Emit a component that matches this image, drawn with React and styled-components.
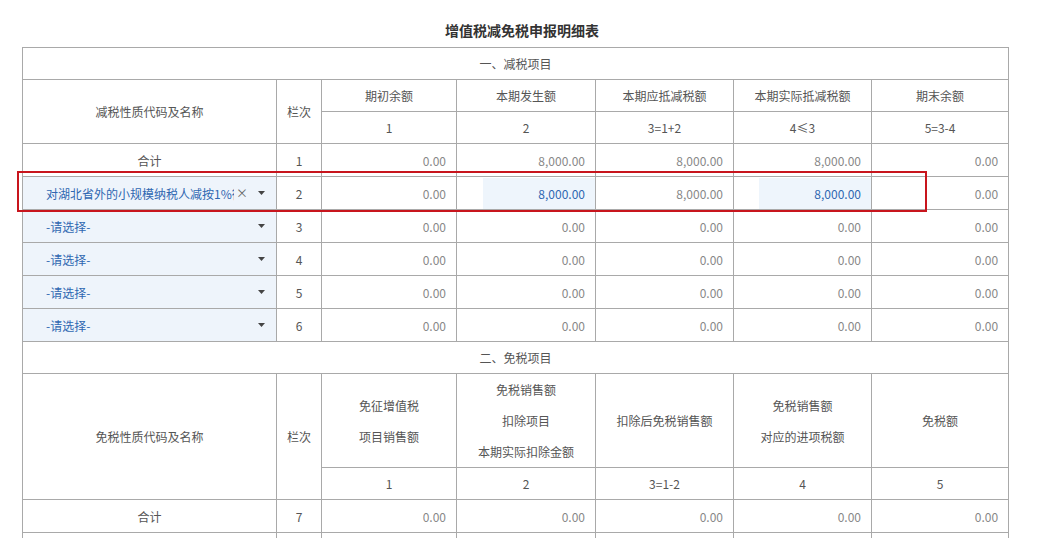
import React from 'react';
import styled, { createGlobalStyle } from 'styled-components';

const GlobalStyle = createGlobalStyle`
  html, body {
    margin: 0;
    padding: 0;
    background: #fff;
  }
  body {
    font-family: "Microsoft YaHei", "Noto Sans CJK SC", "Noto Sans", sans-serif;
    font-size: 12px;
    color: #555;
  }
`;

const Page = styled.div`
  width: 1046px;
  height: 538px;
  overflow: hidden;
  padding-left: 22px;
  box-sizing: border-box;
`;

const Title = styled.div`
  width: 1000px;
  height: 47px;
  padding-top: 21px;
  box-sizing: border-box;
  text-align: center;
  font-size: 14px;
  line-height: 18px;
  font-weight: bold;
  color: #333;
`;

const Wrap = styled.div`
  position: relative;
  width: 986px;
`;

const Table = styled.table`
  border-collapse: collapse;
  table-layout: fixed;
  width: 986px;
`;

const Col = styled.col`
  width: ${(p) => p.$w}px;
`;

const Cell = styled.td`
  border: 1px solid #a9a9a9;
  height: ${(p) => p.$h || 31}px;
  padding: 0;
  text-align: ${(p) => p.$align || 'center'};
  vertical-align: middle;
  color: ${(p) => (p.$muted ? '#888' : '#555')};
  line-height: ${(p) => (p.$lh ? `${p.$lh}px` : 'normal')};
  white-space: nowrap;
  ${(p) => p.$align === 'right' && 'padding-right: 10px;'}
`;

const SelectCell = styled.td`
  border: 1px solid #a9a9a9;
  height: 32px;
  padding: 0;
  background: #eef4fb;
`;

const SelectBox = styled.div`
  display: flex;
  align-items: center;
  padding: 0 11px 0 23px;
  color: #2f67b1;
`;

const SelectText = styled.span`
  flex: 1;
  min-width: 0;
  overflow: hidden;
  white-space: nowrap;
`;

const Clear = styled.span`
  color: #666;
  font-size: 12px;
  line-height: 1;
  margin: 0 10px 0 2px;
`;

const InputCell = styled.td`
  border: 1px solid #a9a9a9;
  height: 32px;
  padding: 0;
`;

const InputBox = styled.div`
  margin-left: auto;
  width: 112px;
  height: 31px;
  box-sizing: border-box;
  padding-right: 10px;
  background: #eef5fc;
  color: #2f67b1;
  text-align: right;
  line-height: 31px;
`;

const Highlight = styled.div`
  position: absolute;
  left: -5px;
  top: 124px;
  width: 910px;
  height: 41px;
  border: 2px solid #c8151d;
  box-sizing: border-box;
  pointer-events: none;
`;

const Caret = () => (
  <svg width="7" height="4" viewBox="0 0 7 4">
    <path d="M0 0h7L3.5 4z" fill="#444" />
  </svg>
);

const widths = [254, 45, 135, 139, 138, 138, 137];

const emptyRows = [3, 4, 5, 6];

const Num = ({ children }) => (
  <Cell $align="right" $muted $h={32}>
    {children}
  </Cell>
);

const App = () => (
  <>
    <GlobalStyle />
    <Page>
      <Title>增值税减免税申报明细表</Title>
      <Wrap>
        <Table>
          <colgroup>
            {widths.map((w, i) => (
              <Col key={i} $w={w} />
            ))}
          </colgroup>
          <tbody>
            <tr>
              <Cell colSpan={7}>一、减税项目</Cell>
            </tr>
            <tr>
              <Cell rowSpan={2}>减税性质代码及名称</Cell>
              <Cell rowSpan={2}>栏次</Cell>
              <Cell>期初余额</Cell>
              <Cell>本期发生额</Cell>
              <Cell>本期应抵减税额</Cell>
              <Cell>本期实际抵减税额</Cell>
              <Cell>期末余额</Cell>
            </tr>
            <tr>
              <Cell>1</Cell>
              <Cell>2</Cell>
              <Cell>3=1+2</Cell>
              <Cell>4≤3</Cell>
              <Cell>5=3-4</Cell>
            </tr>
            <tr>
              <Cell $h={32}>合计</Cell>
              <Cell $h={32}>1</Cell>
              <Num>0.00</Num>
              <Num>8,000.00</Num>
              <Num>8,000.00</Num>
              <Num>8,000.00</Num>
              <Num>0.00</Num>
            </tr>
            <tr>
              <SelectCell>
                <SelectBox>
                  <SelectText>对湖北省外的小规模纳税人减按1%征</SelectText>
                  <Clear>×</Clear>
                  <Caret />
                </SelectBox>
              </SelectCell>
              <Cell $h={32}>2</Cell>
              <Num>0.00</Num>
              <InputCell>
                <InputBox>8,000.00</InputBox>
              </InputCell>
              <Num>8,000.00</Num>
              <InputCell>
                <InputBox>8,000.00</InputBox>
              </InputCell>
              <Num>0.00</Num>
            </tr>
            {emptyRows.map((n) => (
              <tr key={n}>
                <SelectCell>
                  <SelectBox>
                    <SelectText>-请选择-</SelectText>
                    <Caret />
                  </SelectBox>
                </SelectCell>
                <Cell $h={32}>{n}</Cell>
                <Num>0.00</Num>
                <Num>0.00</Num>
                <Num>0.00</Num>
                <Num>0.00</Num>
                <Num>0.00</Num>
              </tr>
            ))}
            <tr>
              <Cell colSpan={7}>二、免税项目</Cell>
            </tr>
            <tr>
              <Cell rowSpan={2}>免税性质代码及名称</Cell>
              <Cell rowSpan={2}>栏次</Cell>
              <Cell $h={93} $lh={31}>
                免征增值税
                <br />
                项目销售额
              </Cell>
              <Cell $h={93} $lh={31}>
                免税销售额
                <br />
                扣除项目
                <br />
                本期实际扣除金额
              </Cell>
              <Cell $h={93}>扣除后免税销售额</Cell>
              <Cell $h={93} $lh={31}>
                免税销售额
                <br />
                对应的进项税额
              </Cell>
              <Cell $h={93}>免税额</Cell>
            </tr>
            <tr>
              <Cell>1</Cell>
              <Cell>2</Cell>
              <Cell>3=1-2</Cell>
              <Cell>4</Cell>
              <Cell>5</Cell>
            </tr>
            <tr>
              <Cell $h={32}>合计</Cell>
              <Cell $h={32}>7</Cell>
              <Num>0.00</Num>
              <Num>0.00</Num>
              <Num>0.00</Num>
              <Num>0.00</Num>
              <Num>0.00</Num>
            </tr>
            <tr>
              <Cell $h={32} />
              <Cell $h={32} />
              <Num />
              <Num />
              <Num />
              <Num />
              <Num />
            </tr>
          </tbody>
        </Table>
        <Highlight />
      </Wrap>
    </Page>
  </>
);

export default App;
